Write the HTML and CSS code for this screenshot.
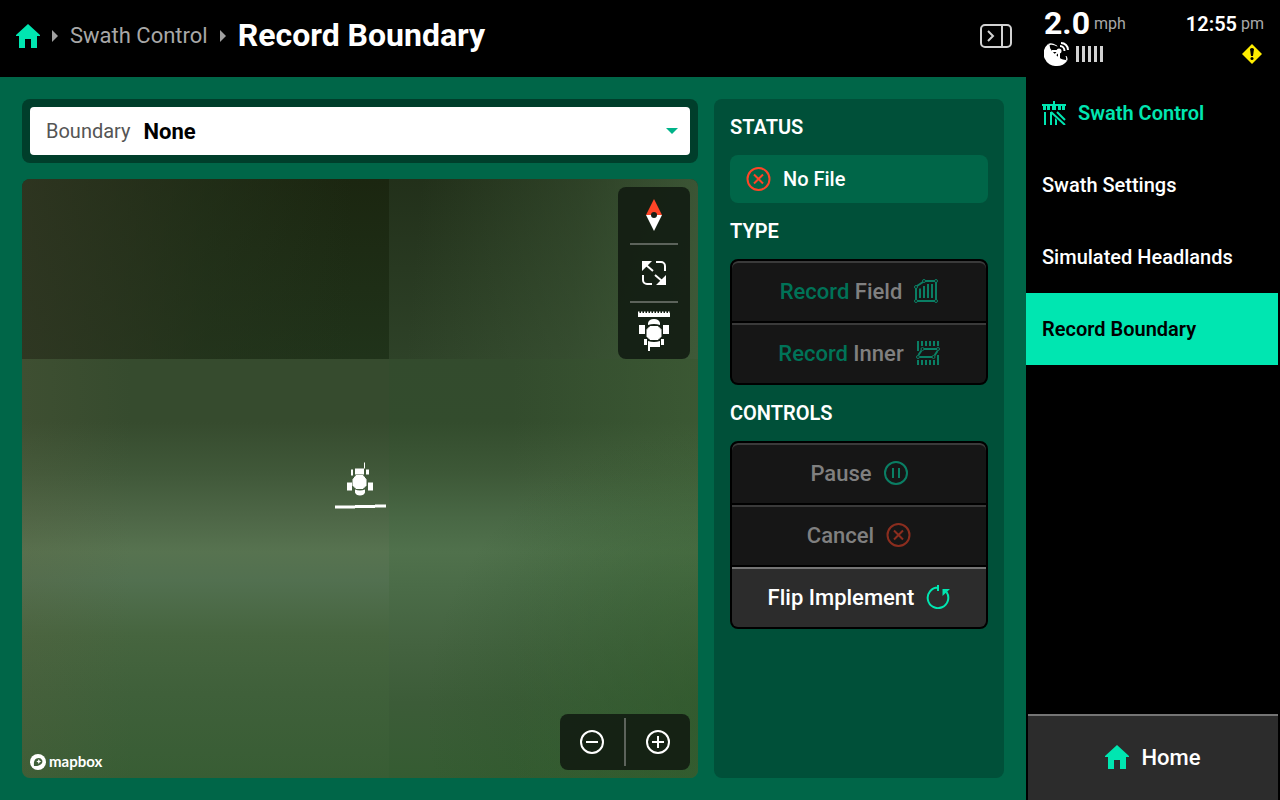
FILE: index.html
```
<!DOCTYPE html>
<html lang="en">
<head>
    <meta charset="UTF-8">
    <meta name="viewport" content="width=device-width, initial-scale=1.0">
    <title>Record Boundary</title>
    <link rel="stylesheet" href="styles.css">
</head>
<body>

    <div class="app">
        <div class="page">
            <header class="topbar">
                <nav class="breadcrumb">
                    <a href="#home" class="home-link" aria-label="Home">
                        <svg width="24" height="24" viewBox="0 0 24 24"><path fill="currentColor" d="M12 0 24 11v1h-3v12h-6v-9H9v9H3V12H0v-1z"/></svg>
                    </a>
                    <svg class="crumb-arrow" width="6" height="12" viewBox="0 0 6 12"><path fill="currentColor" d="M0 0l6 6-6 6z"/></svg>
                    <a href="#swath-control" class="crumb">Swath Control</a>
                    <svg class="crumb-arrow" width="6" height="12" viewBox="0 0 6 12"><path fill="currentColor" d="M0 0l6 6-6 6z"/></svg>
                    <h1>Record Boundary</h1>
                </nav>
                <button class="panel-toggle" aria-label="Toggle side panel">
                    <svg width="32" height="24" viewBox="0 0 32 24" fill="none" stroke="currentColor" stroke-width="2"><rect x="1" y="1" width="30" height="22" rx="4"/><path d="M22 1v22M8 7l5 5-5 5"/></svg>
                </button>
            </header>

            <main class="content">
                <div class="map-column">
                    <div class="boundary-picker">
                        <div class="boundary-field">
                            <label for="boundary">Boundary</label>
                            <select id="boundary">
                                <option>None</option>
                            </select>
                            <svg class="caret" width="12" height="6" viewBox="0 0 12 6"><path fill="currentColor" d="M0 0h12L6 6z"/></svg>
                        </div>
                    </div>

                    <div class="map">
                        <div class="tile tile-nw"></div>
                        <div class="tile tile-ne"></div>
                        <div class="tile tile-sw"></div>
                        <div class="tile tile-se"></div>

                        <!-- vehicle position -->
                        <svg class="vehicle" width="52" height="63" viewBox="0 0 52 63" fill="#fff">
                            <path d="M30 15h1v6h-1zM21 21h9v6h-9zM17 22h2v6h-2zM32 22h3v5h-3z"/>
                            <path d="M22 28h7l3 4v6l-3 3h-7l-3-3v-6z" stroke="#fff" stroke-linejoin="round"/>
                            <path d="M13 35h5v8h-5zM34 35h5v8h-5zM21 42q5 2 10 0v3q-1 3-5 3t-5-3z"/>
                            <path d="M1 58h20v-.5h20V57h11v3H41v.5H21v.5H1z"/>
                        </svg>

                        <div class="map-tools">
                            <button aria-label="Compass">
                                <svg width="16" height="32" viewBox="0 0 16 32"><path fill="#ff4527" d="M8 0l8 16H0z"/><path fill="#fff" d="M0 16h16L8 32z"/><circle cx="8" cy="16" r="3" fill="#182117"/></svg>
                            </button>
                            <button aria-label="Zoom to extent">
                                <svg width="24" height="24" viewBox="0 0 24 24"><path fill="#fff" d="M0 0h10L0 10zM24 24H14l10-10z"/><path fill="none" stroke="#fff" stroke-width="2" d="M4 4l7 6M20 20l-7-6M14 1h5a4 4 0 0 1 4 4v5M10 23H5a4 4 0 0 1-4-4v-5"/></svg>
                            </button>
                            <button aria-label="Center on vehicle">
                                <svg width="32" height="40" viewBox="0 0 32 40" fill="#fff">
                                    <path d="M0 2h32v4H0z"/>
                                    <path d="M0 1.500h32" stroke="#fff" stroke-width="2" stroke-dasharray="1.500 1.500"/>
                                    <path d="M10 14v-2q1-4 6-4t6 4v2q-6-2-12 0z"/>
                                    <path d="M12 15.500h8l3 3v7l-3 3h-8l-3-3v-7z" stroke="#fff" stroke-linejoin="round"/>
                                    <path d="M1 14h6v9H1zM25 14h6v9h-6zM6 28h3v6H6zM23 28h3v6h-3zM10 30q6 2 12 0v6H12v4h-2z"/>
                                </svg>
                            </button>
                        </div>

                        <div class="map-zoom">
                            <button aria-label="Zoom out">
                                <svg width="24" height="24" viewBox="0 0 24 24" fill="none" stroke="#fff" stroke-width="2"><circle cx="12" cy="12" r="11"/><path d="M6 12h12"/></svg>
                            </button>
                            <button aria-label="Zoom in">
                                <svg width="24" height="24" viewBox="0 0 24 24" fill="none" stroke="#fff" stroke-width="2"><circle cx="12" cy="12" r="11"/><path d="M6 12h12M12 6v12"/></svg>
                            </button>
                        </div>

                        <a href="#mapbox" class="map-credit">
                            <svg width="16" height="16" viewBox="0 0 16 16"><circle cx="8" cy="8" r="8" fill="#fff"/><path fill="#40603a" d="M4 12C3.500 8 4.500 4 8.800 4a3.500 3.500 0 0 1 2.700 5.800C9.800 11.800 6.800 12.300 4 12z"/><path fill="#fff" d="M8.800 5l.8 1.700 1.700.8-1.700.8-.8 1.700-.8-1.700-1.700-.8L8 6.700z"/></svg>
                            <span>mapbox</span>
                        </a>
                    </div>
                </div>

                <aside class="controls">
                    <h2>STATUS</h2>
                    <div class="status">
                        <svg class="red" width="25" height="24" viewBox="0 0 25 24" fill="none" stroke="currentColor" stroke-width="2"><circle cx="12.500" cy="12" r="11"/><path d="M8 7.500l9 9M17 7.500l-9 9"/></svg>
                        <span>No File</span>
                    </div>

                    <h2>TYPE</h2>
                    <div class="button-group">
                        <button disabled>
                            <span><em>Record</em> Field</span>
                            <svg class="green" width="24" height="24" viewBox="0 0 24 24" fill="none" stroke="currentColor">
                                <path stroke-width="2" d="M2 9v12M3 22h18M22 21V3M21 2H11M9 3L3 7M6 9.500V19M10 7v12M14 5v14M18 5v14"/>
                                <circle cx="2" cy="8" r="1.500"/><circle cx="10" cy="2" r="1.500"/><circle cx="22" cy="2" r="1.500"/><circle cx="22" cy="22" r="1.500"/><circle cx="2" cy="22" r="1.500"/>
                            </svg>
                        </button>
                        <button disabled>
                            <span><em>Record</em> Inner</span>
                            <svg class="green" width="24" height="24" viewBox="0 0 24 24" fill="none" stroke="currentColor">
                                <path stroke-width="2" d="M2 0v10M6 0v5M10 0v5M14 0v5M18 0v5M22 0v5M2 19v5M6 19v5M10 19v5M14 19v5M18 19v5M22 14v10M8 8h13M5.500 9.500L2.500 14M4 16h12M18.500 14.500L21.500 10"/>
                                <circle cx="6.500" cy="8" r="1.500"/><circle cx="22" cy="8" r="1.500"/><circle cx="2" cy="16" r="1.500"/><circle cx="17.500" cy="16" r="1.500"/>
                            </svg>
                        </button>
                    </div>

                    <h2>CONTROLS</h2>
                    <div class="button-group">
                        <button disabled>
                            <span>Pause</span>
                            <svg class="green" width="24" height="24" viewBox="0 0 24 24" fill="none" stroke="currentColor" stroke-width="2"><circle cx="12" cy="12" r="11"/><path d="M9 7v10M15 7v10"/></svg>
                        </button>
                        <button disabled>
                            <span>Cancel</span>
                            <svg class="red" width="25" height="24" viewBox="0 0 25 24" fill="none" stroke="currentColor" stroke-width="2"><circle cx="12.500" cy="12" r="11"/><path d="M8 7.500l9 9M17 7.500l-9 9"/></svg>
                        </button>
                        <button>
                            <span>Flip Implement</span>
                            <svg class="green" width="24" height="24" viewBox="0 0 24 24"><path fill="none" stroke="currentColor" stroke-width="2" d="M12 0v6M12 2.500A10.300 10.300 0 1 0 20.500 7"/><path fill="currentColor" d="M16.500 4H24l-7.500 7z"/></svg>
                        </button>
                    </div>
                </aside>
            </main>
        </div>

        <div class="sidebar">
            <div class="vitals">
                <div class="vitals-row">
                    <div class="speed"><strong>2.0</strong><span>mph</span></div>
                    <div class="clock"><strong>12:55</strong><span>pm</span></div>
                </div>
                <div class="vitals-row">
                    <div class="signal">
                        <svg width="25" height="24" viewBox="0 0 25 24">
                            <path fill="#fff" d="M4 2A12.500 12.500 0 0 0 13 24c4 0 8-2 10-5z"/>
                            <path fill="#fff" d="M4 2c4-2 9 1 13 5s8 9 6 12z"/>
                            <path d="M6 3c4-1 8 2 11 5s6 7 5 10c-4 0-8-3-11-6S5 6 6 3z"/>
                            <path d="M14 0h11v14h-4l-8-8z"/>
                            <path fill="none" stroke="#fff" stroke-width="2" d="M8 9h7v7M9 15l6-6"/>
                            <circle cx="15" cy="9" r="2.500" fill="#fff"/>
                            <path fill="none" stroke="#fff" stroke-width="2" d="M16 4c2.500 0 4.500 2 4.500 5M17 1c4 0 7 3 7 7"/>
                        </svg>
                        <svg width="28" height="16" viewBox="0 0 28 16" fill="#d2d2d2"><path d="M0 0h3v16H0zM6 0h3v16H6zM12 0h3v16h-3zM18 0h3v16h-3zM24 0h3v16h-3z"/></svg>
                    </div>
                    <svg class="warning" width="20" height="20" viewBox="0 0 20 20"><path fill="#ffed00" d="M10 0l10 10-10 10L0 10z"/><path d="M8 5q2-2 4 0l-1 7H9z"/><circle cx="10" cy="14.500" r="1.500"/></svg>
                </div>
            </div>

            <nav class="menu">
                <a href="#swath-control" class="menu-title">
                    <svg width="24" height="24" viewBox="0 0 24 24" fill="currentColor">
                        <path d="M11 0h2v3h11v2h-1v4h-3V5h-1v4h-3V5h-2v4h-4V5H8v4H5V5H4v4H1V5H0V3h11z"/>
                        <path d="M2 11h2v13H2zM8 11h2v13H8zM13 17l2 2v5h-2z"/>
                        <path fill="none" stroke="currentColor" stroke-width="2" d="M9 11l14 13M15 11l8 8"/>
                    </svg>
                    Swath Control
                </a>
                <a href="#swath-settings">Swath Settings</a>
                <a href="#simulated-headlands">Simulated Headlands</a>
                <a href="#record-boundary" class="active">Record Boundary</a>
            </nav>

            <button class="home-button">
                <svg width="24" height="24" viewBox="0 0 24 24"><path fill="currentColor" d="M12 0 24 11v1h-3v12h-6v-9H9v9H3V12H0v-1z"/></svg>
                <span>Home</span>
            </button>
        </div>
    </div>

</body>
</html>
```
FILE: styles.css
```
* {
    box-sizing: border-box;
}
body {
    margin: 0;
    font-family: Roboto, "Liberation Sans", sans-serif;
    font-size: 20px;
    font-weight: 500;
    background-color: #000;
    color: #fff;
}
a {
    color: inherit;
    text-decoration: none;
}
button {
    margin: 0;
    padding: 0;
    border: 0;
    background: none;
    color: inherit;
    font: inherit;
}
svg {
    display: block;
    flex: none;
}
.app {
    display: flex;
    min-height: 100vh;
}
.page {
    flex: 1;
    display: flex;
    flex-direction: column;
    background-color: #006648;
}

/* top bar */
.topbar {
    display: flex;
    align-items: center;
    justify-content: space-between;
    padding: 18px 14px 18px 16px;
    line-height: 36px;
    border-bottom: 5px solid #000;
    background-color: #000;
}
.breadcrumb {
    display: flex;
    align-items: center;
    gap: 12px;
}
.home-link {
    color: #00e6b1;
}
.crumb-arrow {
    color: #a0a0a0;
}
.crumb {
    font-size: 22px;
    font-weight: 400;
    color: #a8a8a8;
}
.breadcrumb h1 {
    margin: 0;
    font-size: 32px;
    font-weight: 700;
    line-height: 34px;
    padding-bottom: 2px;
}
.panel-toggle {
    color: #d2d2d2;
}

/* content */
.content {
    flex: 1;
    display: flex;
    gap: 16px;
    padding: 22px;
}
.map-column {
    flex: 1;
    display: flex;
    flex-direction: column;
    gap: 16px;
}
.boundary-picker {
    padding: 8px;
    border-radius: 8px;
    background-color: #003e2b;
}
.boundary-field {
    display: flex;
    align-items: center;
    height: 48px;
    padding: 0 12px 0 16px;
    border-radius: 4px;
    background-color: #fff;
}
.boundary-field label {
    margin-right: 13px;
    font-weight: 400;
    color: #555;
}
.boundary-field select {
    flex: 1;
    height: 100%;
    padding: 0;
    border: 0;
    appearance: none;
    background: none;
    color: #000;
    font: inherit;
    font-size: 22px;
    font-weight: 700;
}
.caret {
    color: #00b389;
}

/* map */
.map {
    flex: 1;
    position: relative;
    display: grid;
    grid-template-columns: 367fr 309fr;
    grid-template-rows: 180fr 419fr;
    border-radius: 8px;
    overflow: hidden;
}
.tile-nw {
    background: linear-gradient(90deg, rgba(50, 56, 36, 0.8), rgba(38, 52, 29, 0.5) 50%, rgba(28, 38, 16, 0) 90%), linear-gradient(#1b2610, #20331a);
}
.tile-ne {
    background: linear-gradient(95deg, rgba(64, 92, 58, 0) 10%, rgba(64, 92, 58, 0.4) 60%, rgba(64, 92, 58, 0.9)), linear-gradient(#22301a, #2e4228);
}
.tile-sw {
    background: linear-gradient(90deg, rgba(95, 95, 65, 0.2), rgba(95, 100, 65, 0) 30%), linear-gradient(#364b2e, #364b2e 15%, #405839 27%, #4e6747 38%, #577350 46%, #527050 53%, #46653f 66%, #3f603a 80%, #385d34);
}
.tile-se {
    background: radial-gradient(circle at 105% 85%, rgba(40, 84, 38, 0.6), rgba(40, 84, 38, 0) 60%), linear-gradient(90deg, rgba(76, 116, 66, 0) 40%, rgba(76, 116, 66, 0.3)), linear-gradient(#334b2d, #334c2d 15%, #3d5837 27%, #496845 38%, #50714c 46%, #4b6c48 54%, #446340 68%, #3c5c38 82%, #355c32);
}
.vehicle {
    position: absolute;
    top: 50%;
    left: 50%;
    transform: translate(-50%, -50%);
}
.map-tools,
.map-zoom {
    position: absolute;
    right: 8px;
    display: flex;
    border-radius: 8px;
    background-color: rgba(18, 28, 18, 0.9);
}
.map-tools {
    top: 8px;
    flex-direction: column;
    width: 72px;
    padding: 0 12px;
}
.map-zoom {
    bottom: 8px;
    padding: 4px 0;
}
.map-tools button,
.map-zoom button {
    display: flex;
    align-items: center;
    justify-content: center;
}
.map-tools button {
    height: 56px;
}
.map-zoom button {
    width: 64px;
    height: 48px;
}
.map-tools button + button {
    box-sizing: content-box;
    border-top: 2px solid #5c635b;
}
.map-zoom button + button {
    box-sizing: content-box;
    border-left: 2px solid #5c635b;
}
.map-credit {
    position: absolute;
    left: 8px;
    bottom: 8px;
    display: flex;
    align-items: center;
    gap: 3px;
    height: 16px;
    font-family: Lato, sans-serif;
    font-size: 15px;
    font-weight: 700;
    line-height: 14px;
}
.map-credit span {
    padding-bottom: 2px;
}

/* right-hand controls */
.controls {
    width: 290px;
    padding: 0 16px;
    border-radius: 8px;
    background-color: #005039;
}
.controls h2 {
    margin: 0;
    font-size: 20px;
    font-weight: 600;
    line-height: 56px;
}
.status {
    display: flex;
    align-items: center;
    gap: 12px;
    height: 48px;
    padding: 0 16px;
    border-radius: 8px;
    background-color: #006648;
}
.red {
    color: #ff4527;
}
.green {
    color: #00e6b1;
}
.button-group {
    display: flex;
    flex-direction: column;
    gap: 2px;
    border: 2px solid #000;
    border-radius: 8px;
    background-color: #000;
    overflow: hidden;
}
.button-group button {
    display: flex;
    align-items: center;
    justify-content: center;
    gap: 12px;
    height: 60px;
    background-color: #2c2c2c;
    box-shadow: inset 0 2px #757575;
    font-size: 22px;
}
.button-group button:first-child {
    border-radius: 6px 6px 0 0;
}
.button-group button:disabled {
    background-color: #161616;
    box-shadow: inset 0 2px #3a3a3a;
    color: #808080;
}
.button-group em {
    font-style: normal;
    color: #007358;
}
.button-group button:disabled svg {
    opacity: 0.5;
}

/* sidebar */
.sidebar {
    width: 254px;
    display: flex;
    flex-direction: column;
    padding-right: 2px;
    background-color: #000;
}
.vitals {
    height: 77px;
    padding: 8px 14px 0 18px;
}
.vitals-row {
    display: flex;
    align-items: center;
    justify-content: space-between;
}
.vitals-row + .vitals-row {
    margin-top: 2px;
}
.speed,
.clock,
.signal {
    display: flex;
    align-items: center;
    line-height: 32px;
}
.speed {
    gap: 4px;
}
.clock {
    gap: 4px;
}
.signal {
    gap: 7px;
}
.speed strong {
    font-size: 32px;
    line-height: 30px;
    padding-bottom: 2px;
}
.clock strong {
    font-weight: 600;
}
.speed span,
.clock span {
    font-size: 16px;
    font-weight: 400;
    color: #a8a8a8;
}
.warning {
    margin-right: 2px;
}
.menu {
    flex: 1;
}
.menu a {
    display: flex;
    align-items: center;
    gap: 12px;
    height: 72px;
    padding: 0 16px;
}
.menu .menu-title {
    color: #00e6b1;
    font-weight: 600;
}
.menu .active {
    background-color: #00e6b1;
    color: #000;
    font-weight: 600;
}
.home-button {
    display: flex;
    align-items: center;
    justify-content: center;
    gap: 12px;
    height: 86px;
    margin-left: 2px;
    background-color: #2c2c2c;
    box-shadow: inset 0 2px #757575;
    font-size: 22px;
}
.home-button svg {
    color: #00e6b1;
}
```
